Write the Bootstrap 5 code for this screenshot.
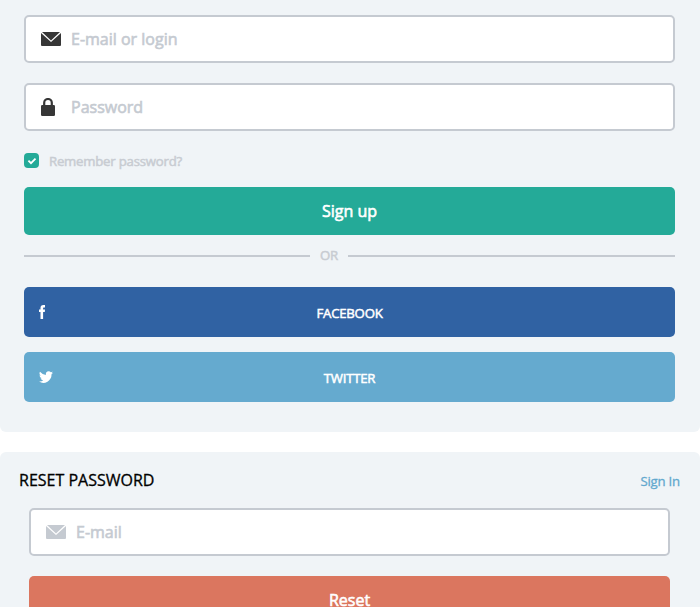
<!DOCTYPE html>
<html lang="en">
<head>
<meta charset="utf-8">
<meta name="viewport" content="width=device-width, initial-scale=1">
<title>Sign up</title>
<link href="https://cdn.jsdelivr.net/npm/bootstrap@5.3.0/dist/css/bootstrap.min.css" rel="stylesheet">
<style>
  body { font-family: "Open Sans", sans-serif; font-size: 16px; overflow: hidden; height: 607px; }
  .panel { background: #f0f4f7; }
  .panel-login { height: 432px; padding: 15px 25px 0 24px; border-radius: 0 0 6px 6px; }
  .panel-reset { margin-top: 20px; height: 155px; overflow: hidden; border-radius: 6px 6px 0 0; }
  .reset-head { padding: 15px 20px 0 19px; height: 56px; }
  .reset-head h1 { font-size: 16px; line-height: 26px; color: #000; -webkit-text-stroke: .3px; }
  .reset-head a { font-size: 13.2px; letter-spacing: -.2px; line-height: 29px; color: #62a8ce; -webkit-text-stroke: .3px; }
  .reset-body { padding: 0 30px 0 29px; }
  .field { height: 48px; border: 2px solid #c5cad1; border-radius: 5px; background: #fff; padding-left: 15px; }
  .field-gap { margin-top: 20px; }
  .field-icon { width: 30px; flex: none; }
  .field .form-control { font-size: 16px; }
  .field .form-control::placeholder { color: #c5cad1; opacity: 1; -webkit-text-stroke: .6px; }
  .icon-dark { color: #363636; }
  .icon-soft { color: #c5cad1; }
  .soft { color: #c8ccd2; font-size: 13.2px; letter-spacing: -.22px; line-height: 18px; -webkit-text-stroke: .5px; }
  .remember { margin: 21px 0 17px; height: 18px; }
  .check-box { width: 15px; height: 15px; border-radius: 4px; background: #24aa98; margin: 1px 10px 0 0; }
  .btn-block { height: 48px; border-radius: 5px; color: #fff; font-size: 16px; -webkit-text-stroke: .6px; }
  .btn-green { background: #24aa98; }
  .btn-red { background: #db765f; }
  .rule { height: 2px; background: #c5cad1; }
  .rule-start { width: 286px; }
  .divider { height: 42px; margin-bottom: 10px; }
  .or-text { width: 38px; text-align: center; padding-bottom: 2px; }
  .btn-social { height: 50px; border-radius: 5px; color: #fff; font-size: 13.2px; letter-spacing: -.22px; -webkit-text-stroke: .5px; padding: 0 15px; }
  .btn-social .label { padding-top: 3px; }
  .btn-social .side { width: 14px; flex: none; }
  .btn-fb { background: #3062a3; }
  .btn-tw { background: #65aacf; margin-top: 15px; }
</style>
</head>
<body class="bg-white">
<svg class="d-none" xmlns="http://www.w3.org/2000/svg">
  <symbol id="mail" viewBox="0 0 20 14">
    <path fill="currentColor" d="M1 0h18L10 8.4zM0 1 10 10.1 20 1V13a1 1 0 0 1-1 1H1a1 1 0 0 1-1-1z"/>
  </symbol>
</svg>

<form class="panel panel-login">
  <div class="field d-flex align-items-center">
    <span class="field-icon icon-dark d-flex"><svg width="20" height="14"><use href="#mail"/></svg></span>
    <input class="form-control border-0 shadow-none p-0 bg-transparent" type="text" placeholder="E-mail or login">
  </div>
  <div class="field field-gap d-flex align-items-center">
    <span class="field-icon icon-dark d-flex">
      <svg width="14" height="18" viewBox="0 0 14 18"><path d="M3.2 8V4.8a3.8 3.8 0 0 1 7.6 0V8" fill="none" stroke="currentColor" stroke-width="2.2"/><rect y="7" width="14" height="11" rx="1.2" fill="currentColor"/></svg>
    </span>
    <input class="form-control border-0 shadow-none p-0 bg-transparent" type="password" placeholder="Password">
  </div>
  <div class="remember d-flex">
    <span class="check-box d-flex"><svg width="15" height="15" viewBox="0 0 15 15"><path d="m4.4 7.6 2.6 2.6 4.5-4.6" fill="none" stroke="#fff" stroke-width="1.8"/></svg></span>
    <span class="soft">Remember password?</span>
  </div>
  <button type="button" class="btn btn-block btn-green w-100 border-0 p-0 d-block">Sign up</button>
  <div class="divider d-flex align-items-center">
    <div class="rule rule-start"></div>
    <span class="soft or-text">OR</span>
    <div class="rule flex-fill"></div>
  </div>
  <button type="button" class="btn btn-social btn-fb w-100 border-0 d-flex align-items-center">
    <span class="side d-flex"><svg width="7" height="14" viewBox="0 0 7 14"><path fill="#fff" d="M1.5 14V7H0V4.6h1.5V3.1C1.5 1.1 2.5 0 4.4 0H6v2.4H5c-.8 0-.9.3-.9.9v1.3H6L5.8 7H4.1v7z"/></svg></span>
    <span class="label flex-fill">FACEBOOK</span>
    <span class="side"></span>
  </button>
  <button type="button" class="btn btn-social btn-tw w-100 border-0 d-flex align-items-center">
    <span class="side d-flex"><svg width="14" height="12" viewBox="0 1.8 24 20.2" preserveAspectRatio="none"><path fill="#fff" d="M24 4.6a10 10 0 0 1-2.8.8 4.9 4.9 0 0 0 2.2-2.7 10 10 0 0 1-3.1 1.2 4.9 4.9 0 0 0-8.4 4.5A14 14 0 0 1 1.7 3.2a4.9 4.9 0 0 0 1.5 6.5 4.9 4.9 0 0 1-2.2-.6 4.9 4.9 0 0 0 3.9 4.9 4.9 4.9 0 0 1-2.2.1 4.9 4.9 0 0 0 4.6 3.4A9.9 9.9 0 0 1 0 19.5 14 14 0 0 0 21.5 7.1 10 10 0 0 0 24 4.6z"/></svg></span>
    <span class="label flex-fill">TWITTER</span>
    <span class="side"></span>
  </button>
</form>

<form class="panel panel-reset">
  <div class="reset-head d-flex justify-content-between">
    <h1 class="m-0 fw-normal">RESET PASSWORD</h1>
    <a href="#" class="text-decoration-none">Sign In</a>
  </div>
  <div class="reset-body">
    <div class="field d-flex align-items-center">
      <span class="field-icon icon-soft d-flex"><svg width="20" height="14"><use href="#mail"/></svg></span>
      <input class="form-control border-0 shadow-none p-0 bg-transparent" type="email" placeholder="E-mail">
    </div>
    <button type="button" class="btn btn-block btn-red field-gap w-100 border-0 p-0">Reset</button>
  </div>
</form>
<script src="https://cdn.jsdelivr.net/npm/bootstrap@5.3.0/dist/js/bootstrap.bundle.min.js"></script>
</body>
</html>
